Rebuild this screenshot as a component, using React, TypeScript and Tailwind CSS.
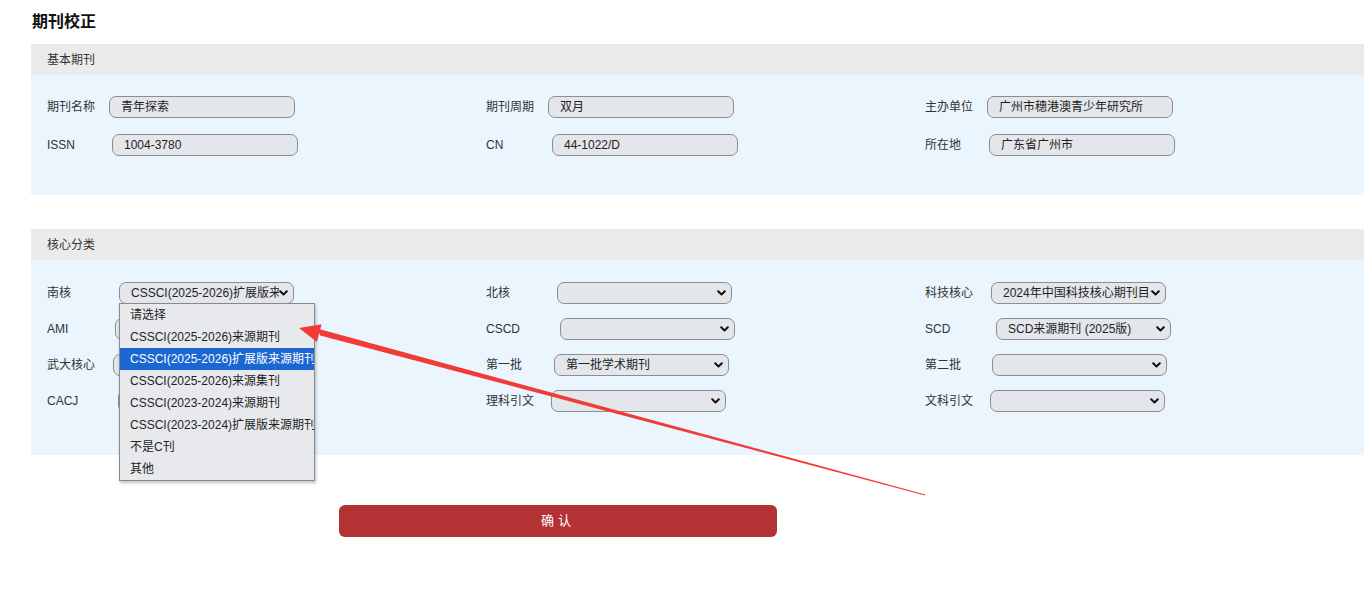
import { useState } from 'react'

const font = "font-['Liberation_Sans','Noto_Sans_CJK_SC',sans-serif]"

interface FieldProps {
  label: string
  value?: string
  offset: string
  width?: string
  select?: boolean
  children?: React.ReactNode
}

function Chevron() {
  return (
    <svg width="9" height="6" viewBox="0 0 9 6" className="shrink-0">
      <path d="M1.2 1.2 4.5 4.5 7.8 1.2" fill="none" stroke="#111" strokeWidth="2" strokeLinecap="round" strokeLinejoin="round" />
    </svg>
  )
}

function Field({ label, value = '', offset, width, select, children }: FieldProps) {
  return (
    <div className="flex items-center h-[22px]">
      <span className={`${offset} shrink-0 text-[12px] text-[#333]`}>{label}</span>
      <div className={`relative ${width ?? (select ? 'w-[175px]' : 'w-[186px]')}`}>
        <div className="flex items-center h-[22px] rounded-[7px] border border-[#8d8d8d] bg-[#e3e6ea] pl-[11px] pr-[5px]">
          <span className="flex-1 min-w-0 overflow-hidden whitespace-nowrap text-[12px] text-[#1f1f1f]">{value}</span>
          {select && <Chevron />}
        </div>
        {children}
      </div>
    </div>
  )
}

const options = [
  '请选择',
  'CSSCI(2025-2026)来源期刊',
  'CSSCI(2025-2026)扩展版来源期刊',
  'CSSCI(2025-2026)来源集刊',
  'CSSCI(2023-2024)来源期刊',
  'CSSCI(2023-2024)扩展版来源期刊',
  '不是C刊',
  '其他',
]

function Panel({ title, children, body }: { title: string; children: React.ReactNode; body: string }) {
  return (
    <section className="ml-[31px] mr-[2px]">
      <div className="h-[31px] flex items-center pl-4 bg-[#ebebeb] text-[12px] text-[#333]">{title}</div>
      <div className={`bg-[#eaf5fe] pl-4 ${body}`}>{children}</div>
    </section>
  )
}

export default function App() {
  const [selected] = useState(2)

  return (
    <div className={`relative h-[593px] w-[1366px] overflow-hidden bg-white ${font}`}>
      <h1 className="pl-[32px] pt-[10px] h-[44px] text-[16px] font-bold text-[#111]">期刊校正</h1>

      <Panel title="基本期刊" body="pt-[21px] pb-[39px]">
        <div className="grid grid-cols-3 gap-y-4">
          <Field label="期刊名称" value="青年探索" offset="w-[62px]" />
          <Field label="期刊周期" value="双月" offset="w-[62px]" />
          <Field label="主办单位" value="广州市穗港澳青少年研究所" offset="w-[62px]" />
          <Field label="ISSN" value="1004-3780" offset="w-[65px]" />
          <Field label="CN" value="44-1022/D" offset="w-[66px]" />
          <Field label="所在地" value="广东省广州市" offset="w-[64px]" />
        </div>
      </Panel>

      <div className="h-[34px]" />

      <Panel title="核心分类" body="pt-[22px] pb-[43px]">
        <div className="grid grid-cols-3 gap-y-[14px]">
          <Field label="南核" value="CSSCI(2025-2026)扩展版来源期刊" offset="w-[72px]" select>
            <ul className="absolute left-0 top-[21px] z-10 w-[196px] overflow-hidden border border-[#8a8a8a] bg-[#e7e9ec] shadow-[1px_2px_3px_rgba(0,0,0,0.25)]">
              {options.map((o, i) => (
                <li
                  key={o}
                  className={`h-[22px] flex items-center pl-[10px] whitespace-nowrap text-[12px] ${
                    i === selected ? 'bg-[#1b66d2] text-white' : 'text-[#1f1f1f]'
                  }`}
                >
                  {o}
                </li>
              ))}
            </ul>
          </Field>
          <Field label="北核" offset="w-[71px]" select />
          <Field label="科技核心" value="2024年中国科技核心期刊目录" offset="w-[66px]" select />
          <Field label="AMI" offset="w-[68px]" select />
          <Field label="CSCD" offset="w-[74px]" select />
          <Field label="SCD" value="SCD来源期刊 (2025版)" offset="w-[71px]" select />
          <Field label="武大核心" offset="w-[66px]" select />
          <Field label="第一批" value="第一批学术期刊" offset="w-[68px]" select />
          <Field label="第二批" offset="w-[67px]" select />
          <Field label="CACJ" offset="w-[71px]" select />
          <Field label="理科引文" offset="w-[65px]" select />
          <Field label="文科引文" offset="w-[65px]" select />
        </div>
      </Panel>

      <div className="pt-[50px] pl-[339px]">
        <button className="w-[438px] h-[32px] rounded-[6px] bg-[#b33234] text-white text-[13px] tracking-[4px]">
          确认
        </button>
      </div>

      {/* annotation arrow */}
      <svg className="pointer-events-none absolute inset-0 z-20" width="1366" height="593">
        <polygon points="318.1,328.8 320.1,335.4 925.1,495.4 925.3,494.6" fill="#f23b37" />
        <polygon points="299,328 321.6,324.3 317,342" fill="#f23b37" />
      </svg>
    </div>
  )
}
